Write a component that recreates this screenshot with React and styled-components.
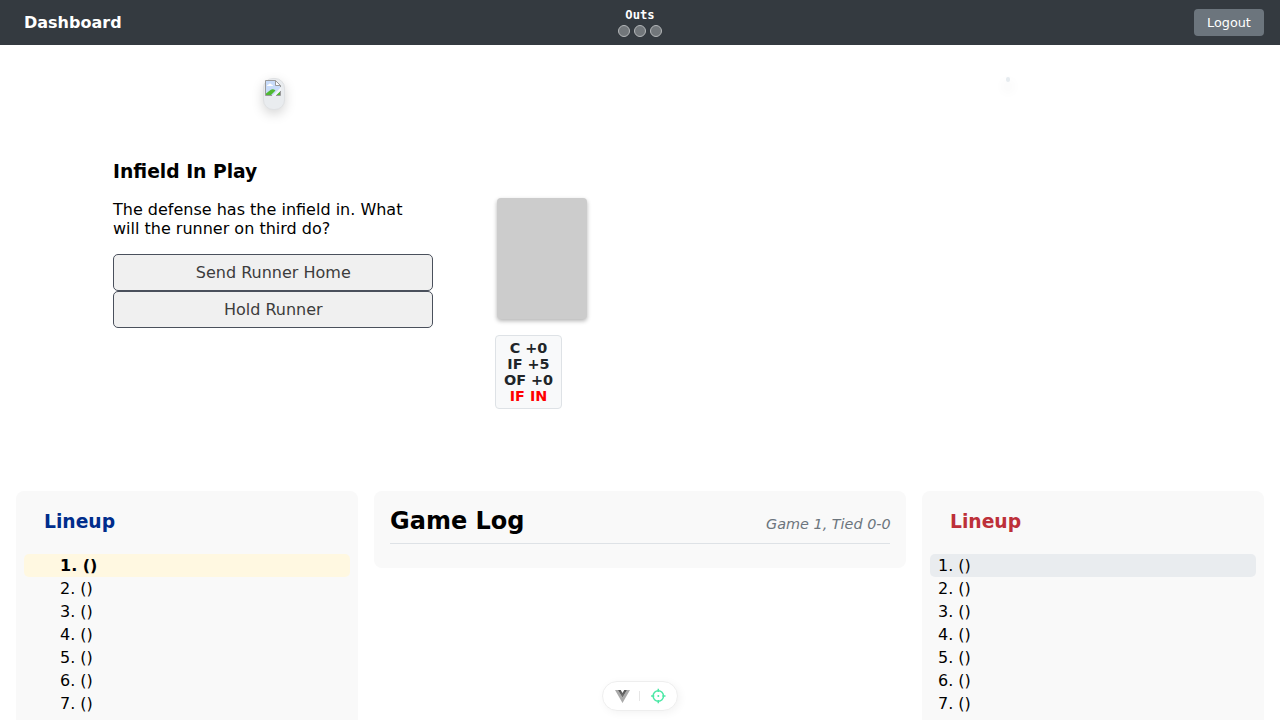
import React from "react";
import styled, { createGlobalStyle } from "styled-components";

const GlobalStyle = createGlobalStyle`
  * { box-sizing: border-box; }
  html, body { margin: 0; height: 720px; overflow: hidden; background: #fff; }
  body { font: 16px/19px "DejaVu Sans", sans-serif; color: #000; }
  h2, h3, p, ol { margin: 0; padding: 0; }
`;

const Page = styled.div`
  height: 720px;
  overflow: hidden;
  display: flex;
  flex-direction: column;
`;

const NavBar = styled.nav`
  flex: none;
  height: 45px;
  padding: 0 16px 0 24px;
  background: #343a40;
  color: #fff;
  display: grid;
  grid-template-columns: 1fr auto 1fr;
  align-items: center;
`;

const Brand = styled.span`
  font-weight: bold;
`;

const OutsBox = styled.div`
  display: flex;
  flex-direction: column;
  align-items: center;
  gap: 3px;
  margin-left: -8px;
  font: bold 12.16px/14px "DejaVu Sans Mono", monospace;
`;

const OutDots = styled.div`
  display: flex;
  gap: 4px;
`;

const OutDot = styled.i`
  width: 12px;
  height: 12px;
  border-radius: 50%;
  background: #72777b;
  border: 1px solid #b4b7b9;
`;

const Logout = styled.button`
  justify-self: end;
  width: 70px;
  height: 27px;
  padding: 0;
  border: 0;
  border-radius: 4px;
  background: #6c757d;
  color: #fff;
  font: 12.8px "DejaVu Sans", sans-serif;
`;

const Field = styled.main`
  flex: none;
  height: 446px;
`;

const TokenRow = styled.div`
  height: 108px;
  padding: 32px 270px 0 263px;
  display: flex;
  justify-content: space-between;
`;

const PlayerToken = styled.div`
  width: 22px;
  height: 32px;
  margin-top: 1px;
  padding: 1px 0 0 1px;
  border: 1px solid #dfe1e3;
  border-radius: 10px;
  background: #e9ecef;
  box-shadow: 0 4px 12px rgba(0, 0, 0, 0.17);
  svg { display: block; }
`;

const EmptyToken = styled.div`
  width: 4px;
  height: 5px;
  border-radius: 2px;
  background: #e6ebef;
  box-shadow: 0 7px 12px 2px rgba(0, 0, 0, 0.06);
`;

const PlayRow = styled.section`
  padding-left: 113px;
  display: flex;
  align-items: flex-start;
`;

const Decision = styled.div`
  width: 320px;
  padding-top: 8px;
`;

const DecisionTitle = styled.h3`
  font-size: 18.72px;
  line-height: 22px;
`;

const DecisionText = styled.p`
  padding: 17px 0 16px;
`;

const Choice = styled.button`
  display: block;
  width: 100%;
  height: 37px;
  padding: 0 0 0 0.5px;
  border: 1px solid #4a505c;
  border-radius: 5px;
  background: #f0f0f0;
  color: #3c3c3c;
  font: 16px "DejaVu Sans", sans-serif;
`;

const Defense = styled.div`
  padding: 45px 0 0 62px;
`;

const CardSlot = styled.div`
  width: 90px;
  height: 121px;
  margin: 0 0 16px 2px;
  border-radius: 4px;
  background: #ccc;
  box-shadow: 0 2px 4px rgba(0, 0, 0, 0.3);
`;

const Ratings = styled.div`
  width: 67px;
  height: 74px;
  padding-top: 4px;
  border: 1px solid #dee2e6;
  border-radius: 4px;
  background: #f8f9fa;
  color: #212529;
  text-align: center;
  font-size: 14.4px;
  font-weight: bold;
  line-height: 16px;
`;

const Rating = styled.div`
  color: ${(p) => (p.$alert ? "#f00" : "inherit")};
  white-space: nowrap;
`;

const Panels = styled.div`
  padding: 0 16px;
  display: grid;
  grid-template-columns: 342px 532px 342px;
  gap: 16px;
  align-items: start;
`;

const Panel = styled.section`
  border-radius: 8px;
  background: #f9f9f9;
`;

const LineupPanel = styled(Panel)`
  height: 320px;
  padding: 20px 8px 0;
`;

const LineupTitle = styled.h3`
  padding: 0 20px;
  margin-bottom: 21px;
  color: ${(p) => p.$color};
  font-size: 18.72px;
  line-height: 22px;
`;

const LineupList = styled.ol`
  list-style: none;
`;

const Batter = styled.li`
  height: 23px;
  padding: 2px 0 2px ${(p) => p.$indent}px;
  border-radius: 5px;
  background: ${(p) => p.$highlight || "transparent"};
  font-weight: ${(p) => (p.$bold ? "bold" : "normal")};
`;

const LogPanel = styled(Panel)`
  height: 77px;
  padding: 0 16px;
`;

const LogHeader = styled.div`
  height: 53px;
  padding-top: 16px;
  border-bottom: 1px solid #dee2e6;
  display: flex;
  justify-content: space-between;
`;

const LogTitle = styled.h2`
  font-size: 24px;
  line-height: 29px;
`;

const LogStatus = styled.span`
  padding-top: 8px;
  margin-right: -0.7px;
  color: #6c757d;
  font-size: 14.4px;
  line-height: 19px;
  font-style: italic;
`;

const DevPill = styled.div`
  position: fixed;
  left: 602px;
  top: 681px;
  width: 76px;
  height: 30px;
  padding: 0 11px 0 12px;
  border: 1px solid #eee;
  border-radius: 15px;
  background: #fff;
  box-shadow: 2px 2px 8px rgba(0, 0, 0, 0.05);
  display: flex;
  align-items: center;
  justify-content: space-between;
  svg { display: block; }
`;

const PillDivider = styled.i`
  width: 1px;
  height: 10px;
  margin-right: 1px;
  background: #e6e6e6;
`;

const BrokenImage = () => (
  <svg width="18" height="18" viewBox="1 1 18 18">
    <path d="M1.5 1.5h10l5 5v10h-15z" fill="#c8dcfa" />
    <path d="M3 7q0-1.5 1.5-1.5Q6 3.5 7.5 5.5 9 5.5 9 7z" fill="#fff" />
    <path d="M2 16v-1.5L6.5 11q2.5-1.5 5 .5L7 16z" fill="#50b932" />
    <path d="M12 16l4-3.5V16z" fill="#50b932" />
    <path d="M8 17.2L17.2 8v3l-6 6.2z" fill="#f3f5f7" />
    <path d="M16.5 8V6.5l-5-5h-10v15H8M11.5 1.5v5h5M12 16.5h4.5V12" fill="none" stroke="#999" />
    <path d="M12 2.7V6h3.3z" fill="#fff" />
  </svg>
);

const VueLogo = () => (
  <svg width="15" height="13" viewBox="0 0 256 221">
    <defs>
      <linearGradient id="vueInner" x1="0" y1="0" x2="0" y2="1">
        <stop offset="0" stopColor="#555" />
        <stop offset="1" stopColor="#777" />
      </linearGradient>
    </defs>
    <path d="M0 0l128 220.8L256 0h-51.2L128 132.5 50.6 0z" fill="#aaa" />
    <path d="M50.6 0L128 133.1 204.8 0h-47.4L128 51.2 97.9 0z" fill="url(#vueInner)" />
  </svg>
);

const Crosshair = () => (
  <svg width="16" height="16" viewBox="0 0 16 16" fill="none" stroke="#4ce8a6" strokeWidth="1.5">
    <circle cx="8.3" cy="8" r="5.2" />
    <path d="M8.3 .8v3.2M8.3 12v3.2M1.1 8h3.2M12.3 8h3.2" />
    <circle cx="8.3" cy="8" r="1" fill="#4ce8a6" stroke="none" />
  </svg>
);

const order = [1, 2, 3, 4, 5, 6, 7];

function Lineup({ color, indent, highlight, bold }) {
  return (
    <LineupPanel>
      <LineupTitle $color={color}>Lineup</LineupTitle>
      <LineupList>
        {order.map((n) => (
          <Batter key={n} $indent={indent} $highlight={n === 1 && highlight} $bold={n === 1 && bold}>
            {n}. ()
          </Batter>
        ))}
      </LineupList>
    </LineupPanel>
  );
}

export default function App() {
  return (
    <Page>
      <GlobalStyle />
      <NavBar>
        <Brand>Dashboard</Brand>
        <OutsBox>
          Outs
          <OutDots>
            <OutDot />
            <OutDot />
            <OutDot />
          </OutDots>
        </OutsBox>
        <Logout>Logout</Logout>
      </NavBar>
      <Field>
        <TokenRow>
          <PlayerToken>
            <BrokenImage />
          </PlayerToken>
          <EmptyToken />
        </TokenRow>
        <PlayRow>
          <Decision>
            <DecisionTitle>Infield In Play</DecisionTitle>
            <DecisionText>The defense has the infield in. What will the runner on third do?</DecisionText>
            <Choice>Send Runner Home</Choice>
            <Choice>Hold Runner</Choice>
          </Decision>
          <Defense>
            <CardSlot />
            <Ratings>
              <Rating>C +0</Rating>
              <Rating>IF +5</Rating>
              <Rating>OF +0</Rating>
              <Rating $alert>IF IN</Rating>
            </Ratings>
          </Defense>
        </PlayRow>
      </Field>
      <Panels>
        <Lineup color="#002d8c" indent={36} highlight="#fff8e1" bold />
        <LogPanel>
          <LogHeader>
            <LogTitle>Game Log</LogTitle>
            <LogStatus>Game 1, Tied 0-0</LogStatus>
          </LogHeader>
        </LogPanel>
        <Lineup color="#bd3039" indent={8} highlight="#e9ecef" />
      </Panels>
      <DevPill>
        <VueLogo />
        <PillDivider />
        <Crosshair />
      </DevPill>
    </Page>
  );
}
